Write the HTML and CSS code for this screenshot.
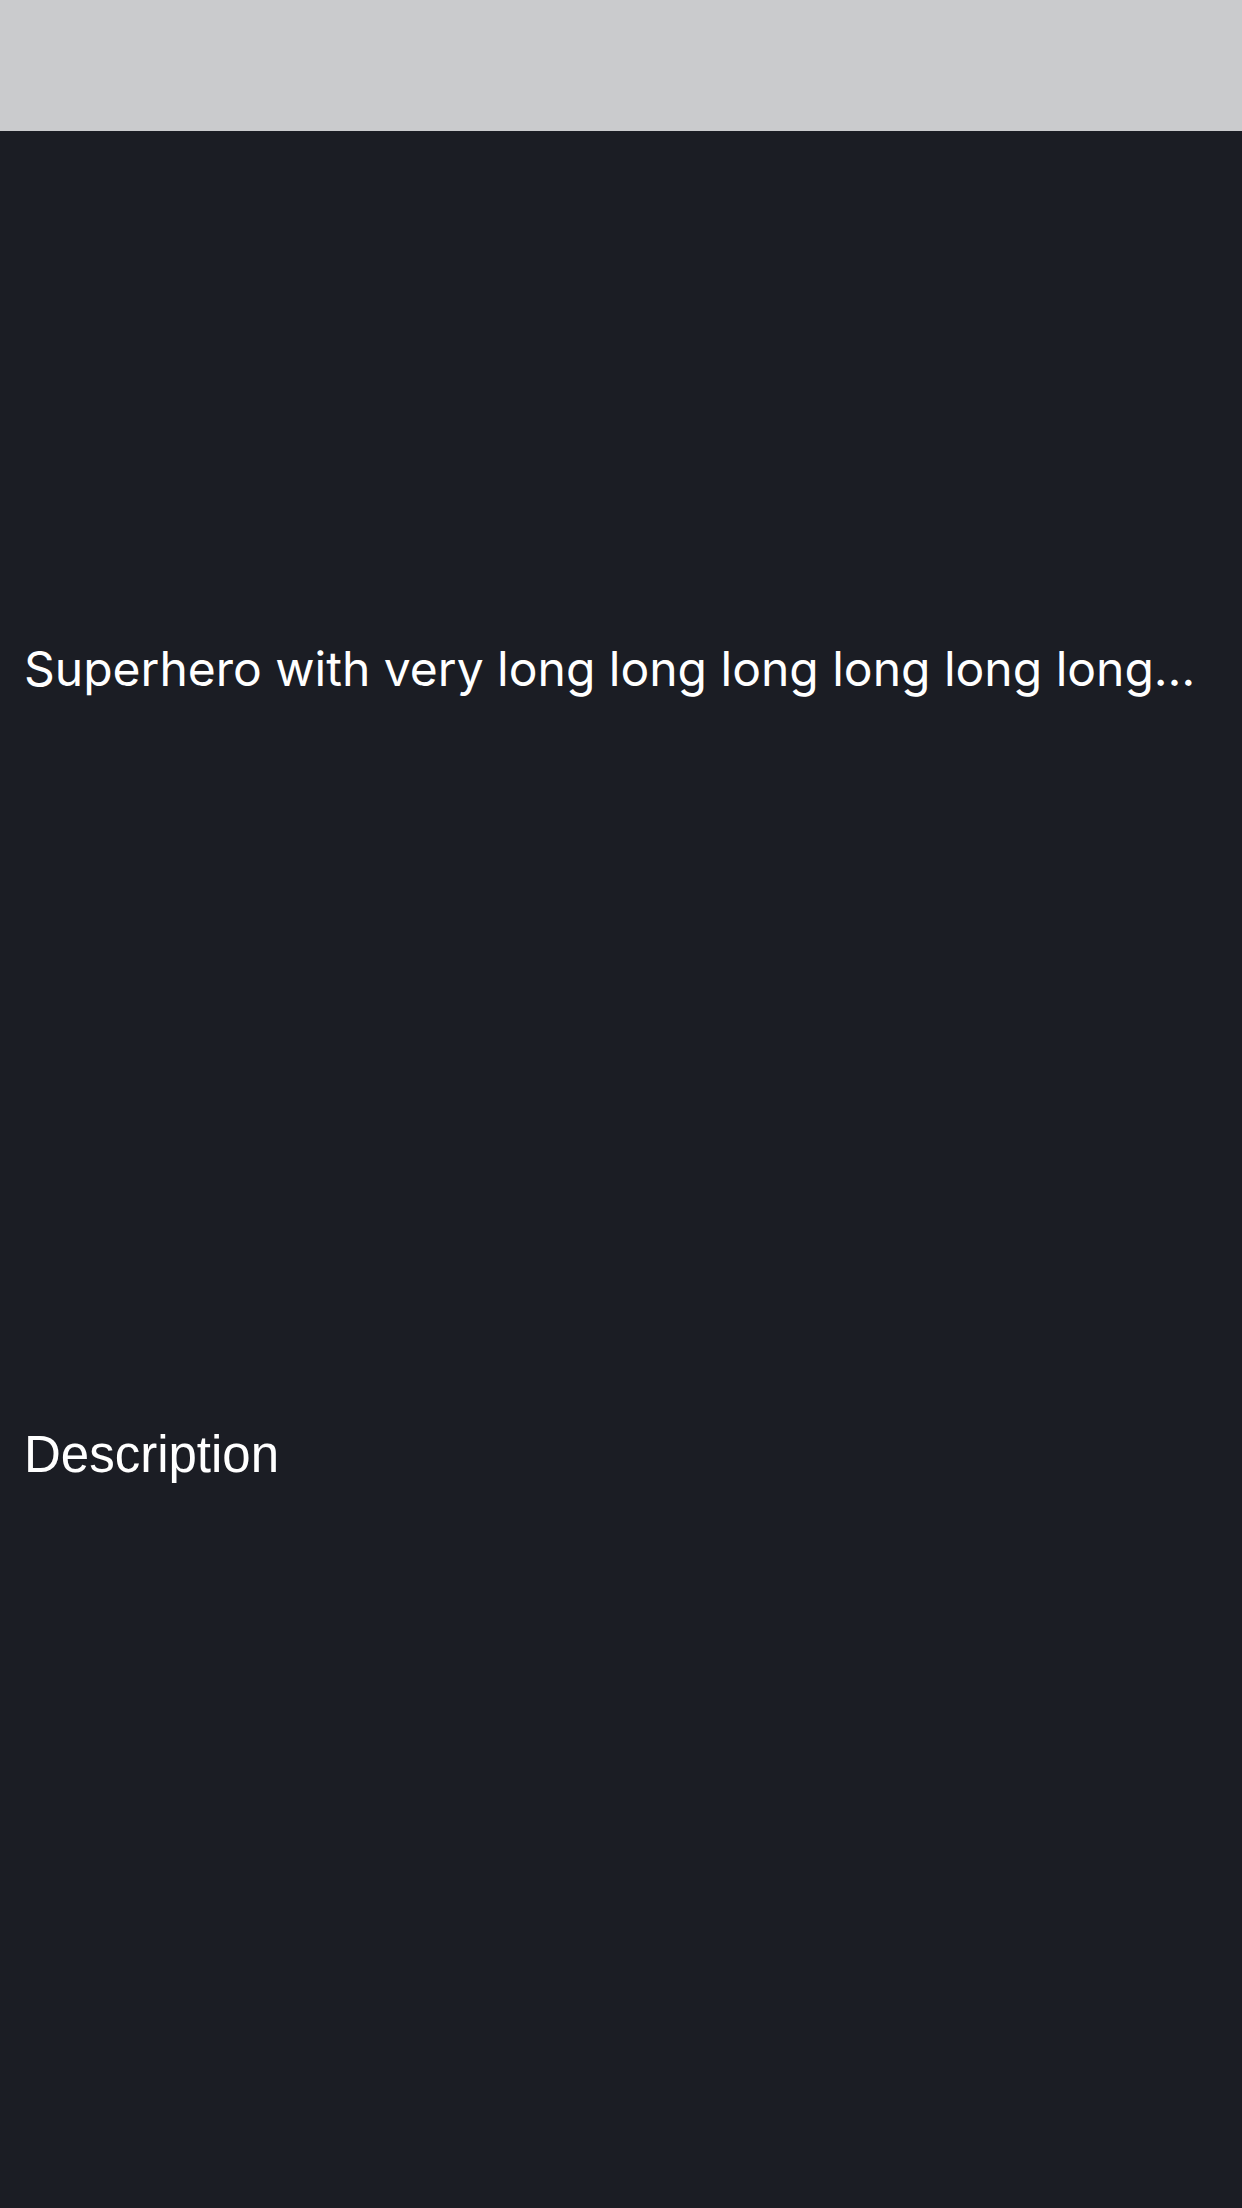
FILE: index.html
```html
<!DOCTYPE html>
<html lang="en">
<head>
<meta charset="utf-8">
<title>Superhero</title>
<link rel="stylesheet" href="styles.css">
</head>
<body>
<header class="navbar"></header>
<main class="content">
  <h1 class="hero-name">Superhero with very long long long long long long…</h1>
  <h2 class="section-title">Description</h2>
</main>
</body>
</html>
```

FILE: styles.css
```css
html, body {
  margin: 0;
  padding: 0;
}
body {
  width: 1242px;
  min-height: 2208px;
  background: #1b1d24;
  color: #ffffff;
}
.navbar {
  height: 131px;
  background: #cacbcd;
}
.content {
  display: flex;
  flex-direction: column;
  padding: 508px 24px 0 24px;
}
.hero-name {
  margin: 0;
  font-family: "Inter", "Liberation Sans", sans-serif;
  font-weight: 400;
  font-size: 48px;
  line-height: 60px;
  white-space: nowrap;
  overflow: hidden;
}
.section-title {
  margin: 726px 0 0 0;
  font-family: "Liberation Sans", Arial, sans-serif;
  font-weight: 400;
  font-size: 51px;
  line-height: 60px;
}
```
